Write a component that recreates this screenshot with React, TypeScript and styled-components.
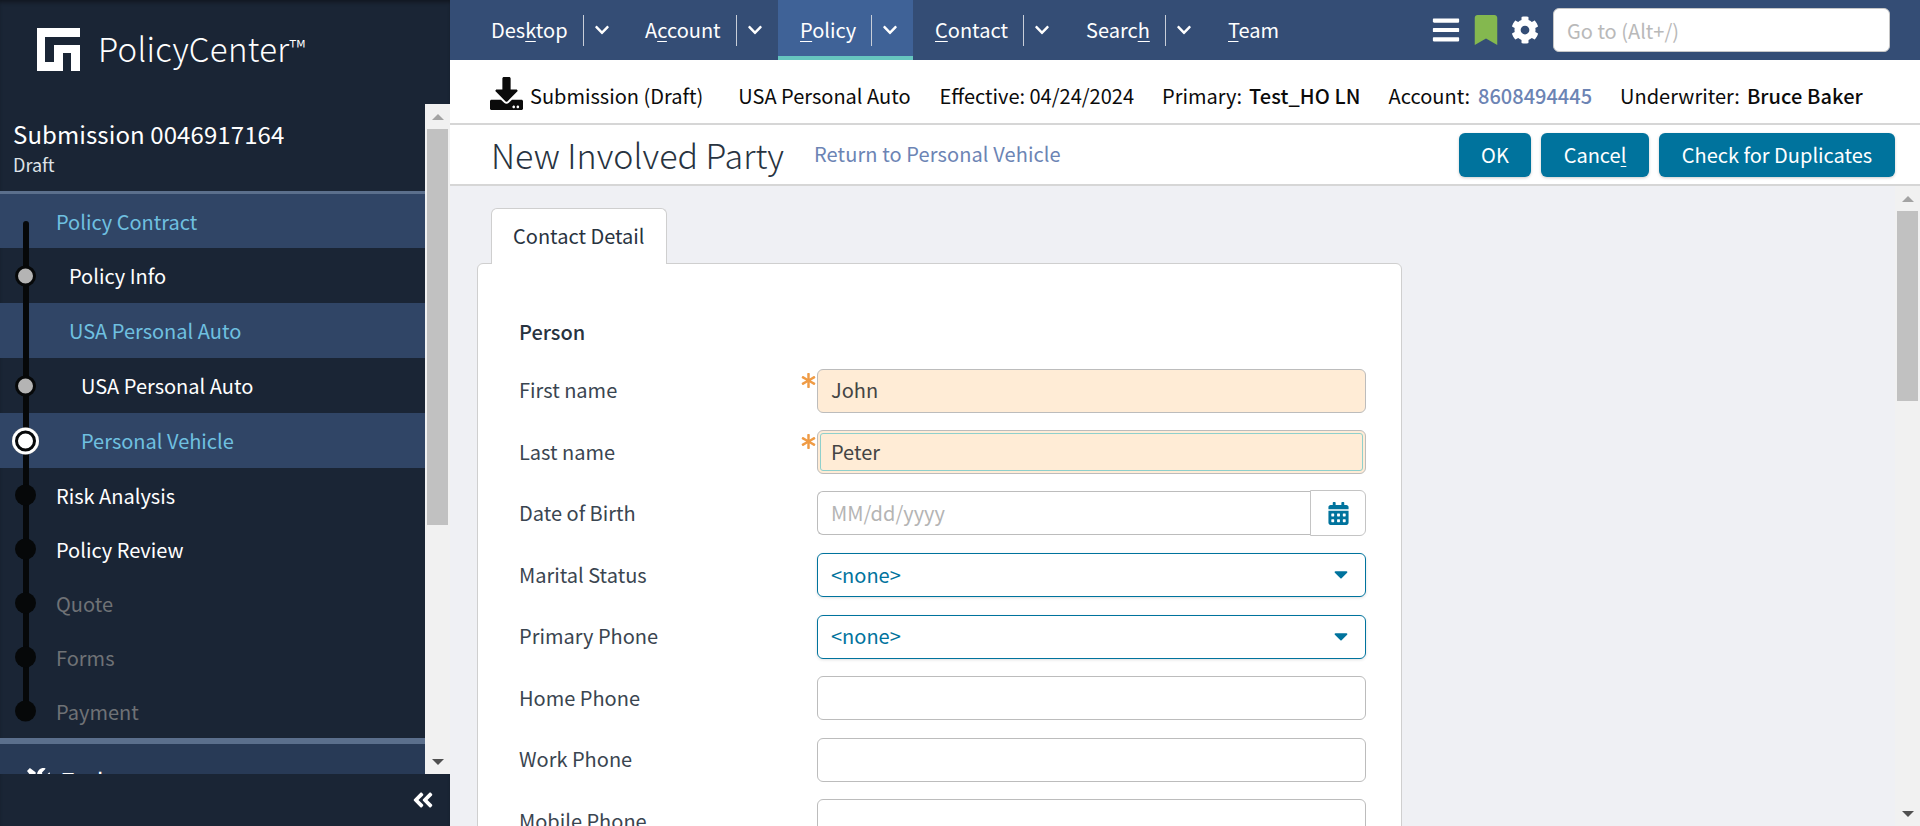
import React from "react";
import styled, { createGlobalStyle } from "styled-components";
import {
  FaAngleDoubleLeft,
  FaAsterisk,
  FaBars,
  FaBookmark,
  FaCalendarAlt,
  FaCaretDown,
  FaChevronDown,
  FaCog,
  FaDownload,
  FaTools,
} from "react-icons/fa";

const FONT = `"Noto Sans CJK SC", "Noto Sans", sans-serif`;

const GlobalStyle = createGlobalStyle`
  html, body { margin: 0; padding: 0; height: 100%; overflow: hidden; }
  body { font-family: ${FONT}; font-size: 20px; color: #28333f; }
  * { box-sizing: border-box; }
  u { text-underline-offset: 3px; text-decoration-thickness: 1px; }
`;

const Page = styled.div`
  display: flex;
  width: 1920px;
  height: 826px;
  overflow: hidden;
`;

/* ---- left column ---- */
const Side = styled.aside`
  width: 450px;
  flex: none;
  display: flex;
  flex-direction: column;
  background: #1a2535;
  color: #fff;
  box-shadow: inset 0 4px 4px -2px #11161f;
`;

const Brand = styled.div`
  height: 104px;
  flex: none;
  display: flex;
  align-items: flex-start;
  padding: 28px 0 0 37px;
  gap: 18px;
`;

const BrandName = styled.div`
  font-size: 33px;
  font-weight: 300;
  line-height: 41px;
  letter-spacing: 0.3px;
`;

const TradeMark = styled.span`
  font-size: 23px;
  line-height: 0;
  vertical-align: 5px;
`;

const SideBody = styled.div`
  flex: 1;
  display: flex;
  min-height: 0;
`;

const SideScroll = styled.div`
  width: 425px;
  overflow: hidden;
  display: flex;
  flex-direction: column;
`;

const SubmissionHead = styled.div`
  height: 87px;
  flex: none;
  padding: 14px 0 0 13px;
`;

const SubmissionTitle = styled.div`
  font-size: 24px;
  line-height: 32px;
  letter-spacing: 0.1px;
`;

const SubmissionState = styled.div`
  margin-top: 2px;
  font-size: 18px;
  line-height: 24px;
  color: #dfe3e8;
`;

const Divider = styled.div<{ $h: number }>`
  height: ${(p) => p.$h}px;
  flex: none;
  background: #5b6f8c;
`;

const Steps = styled.div`
  position: relative;
  flex: none;
`;

const Rail = styled.div`
  position: absolute;
  left: 23px;
  top: 27px;
  width: 6px;
  height: 491px;
  border-radius: 3px;
  background: #060809;
  z-index: 1;
`;

const Step = styled.div<{ $active?: boolean; $indent: number; $off?: boolean; $h: number }>`
  position: relative;
  height: ${(p) => p.$h}px;
  display: flex;
  align-items: center;
  padding-left: ${(p) => p.$indent}px;
  font-size: 20px;
  background: ${(p) => (p.$active ? "#304566" : "transparent")};
  color: ${(p) => (p.$active ? "#6fc0e0" : p.$off ? "#6f7276" : "#fff")};
`;

const Dot = styled.span<{ $kind: "plain" | "done" | "current" }>`
  position: absolute;
  z-index: 2;
  top: 50%;
  left: ${(p) => (p.$kind === "current" ? 12 : 15)}px;
  width: ${(p) => (p.$kind === "current" ? 27 : 21)}px;
  height: ${(p) => (p.$kind === "current" ? 27 : 21)}px;
  transform: translateY(-50%);
  border-radius: 50%;
  background: ${(p) => (p.$kind === "plain" ? "#060809" : p.$kind === "done" ? "#b4b4b4" : "#fff")};
  border: ${(p) => (p.$kind === "done" ? "3px solid #060809" : "none")};
  ${(p) => (p.$kind === "current" ? "box-shadow: inset 0 0 0 3px #fff, inset 0 0 0 6px #060809;" : "")}
`;

const ToolsRow = styled.div`
  height: 70px;
  flex: none;
  display: flex;
  align-items: center;
  gap: 12px;
  padding-left: 27px;
  background: #283a56;
  font-size: 20px;
  font-weight: 500;
`;

const Track = styled.div`
  flex: none;
  width: 25px;
  background: #f1f1f1;
  display: flex;
  flex-direction: column;
  align-items: center;
  padding: 0 2px;
`;

const Arrow = styled.div<{ $dir: "up" | "down"; $muted?: boolean }>`
  flex: none;
  height: 25px;
  width: 100%;
  display: flex;
  align-items: center;
  justify-content: center;
  &::before {
    content: "";
    width: 0;
    height: 0;
    border-left: 6px solid transparent;
    border-right: 6px solid transparent;
    ${(p) => (p.$dir === "up" ? "border-bottom" : "border-top")}: 6px solid ${(p) => (p.$muted ? "#a3a3a3" : "#505050")};
  }
`;

const Thumb = styled.div<{ $h: number }>`
  flex: none;
  width: 100%;
  height: ${(p) => p.$h}px;
  background: #c1c1c1;
`;

const TrackGap = styled.div`
  flex: 1;
`;

const SideFoot = styled.div`
  height: 52px;
  flex: none;
  display: flex;
  align-items: center;
  justify-content: flex-end;
  padding-right: 15px;
  font-size: 24px;
`;

/* ---- main column ---- */
const Main = styled.main`
  flex: 1;
  min-width: 0;
  display: flex;
  flex-direction: column;
`;

const TopNav = styled.nav`
  height: 60px;
  flex: none;
  display: flex;
  align-items: stretch;
  background: #344d75;
  color: #fff;
  padding-left: 41px;
`;

const NavItem = styled.div<{ $active?: boolean; $w: number; $after?: number }>`
  width: ${(p) => p.$w}px;
  margin-right: ${(p) => p.$after ?? 0}px;
  display: flex;
  align-items: center;
  flex: none;
  background: ${(p) => (p.$active ? "#3f6297" : "transparent")};
  box-shadow: ${(p) => (p.$active ? "inset 0 -4px 0 #66c6c0" : "none")};
  padding-left: ${(p) => (p.$active ? 22 : 0)}px;
  font-size: 20px;
`;

const NavLabel = styled.span`
  line-height: 28px;
`;

const NavSep = styled.span`
  width: 1px;
  height: 31px;
  background: #c8ced8;
  margin: 0 10px 0 15px;
`;

const NavTail = styled.div`
  margin-left: auto;
  display: flex;
  align-items: center;
  gap: 10px;
  padding-right: 30px;
`;

const GoTo = styled.input`
  width: 337px;
  height: 44px;
  margin-left: 4px;
  border: 1px solid #c6c6c6;
  border-radius: 6px;
  padding: 0 13px;
  font: 400 20px ${FONT};
  color: #333;
  &::placeholder {
    color: #b9b9b9;
    opacity: 1;
  }
`;

const InfoBar = styled.div`
  height: 65px;
  flex: none;
  display: flex;
  align-items: center;
  padding: 7px 0 0 40px;
  border-bottom: 2px solid #d6d6d6;
  background: #fff;
  color: #0b0b0b;
  font-size: 20px;
`;

const DownloadIcon = styled(FaDownload)`
  margin: -4px 7px 0 0;
`;

const InfoItem = styled.span<{ $gap: number }>`
  margin-right: ${(p) => p.$gap}px;
  white-space: nowrap;
`;

const InfoStrong = styled.b`
  font-weight: 500;
  margin-left: 7px;
  letter-spacing: 0.1px;
`;

const InfoLink = styled.b`
  font-weight: 500;
  margin-left: 8px;
  color: #6c84b4;
`;

const TitleBar = styled.div`
  height: 61px;
  flex: none;
  display: flex;
  align-items: center;
  background: #fff;
  border-bottom: 2px solid #d6d6d6;
  padding: 0 25px 0 41px;
`;

const PageTitle = styled.h1`
  margin: 0;
  font-size: 34px;
  font-weight: 300;
  color: #28333f;
`;

const BackLink = styled.a`
  margin: 0 0 3px 30px;
  color: #6c84b4;
  font-size: 20px;
  letter-spacing: 0.1px;
`;

const Actions = styled.div`
  margin-left: auto;
  display: flex;
  gap: 10px;
`;

const ActionBtn = styled.button<{ $w: number }>`
  width: ${(p) => p.$w}px;
  height: 44px;
  border: none;
  border-radius: 6px;
  background: #00739d;
  color: #fff;
  font: 400 20px ${FONT};
  box-shadow: 0 1px 3px rgba(0, 0, 0, 0.2);
`;

const Content = styled.div`
  flex: 1;
  min-height: 0;
  display: flex;
  background: #eff0f4;
`;

const Canvas = styled.div`
  flex: 1;
  min-width: 0;
  overflow: hidden;
  padding: 22px 0 0 27px;
`;

const TabRow = styled.div`
  display: flex;
  padding-left: 14px;
`;

const Tab = styled.div`
  width: 176px;
  height: 56px;
  margin-bottom: -1px;
  position: relative;
  z-index: 1;
  background: #fff;
  border: 1px solid #cfcfcf;
  border-bottom: none;
  border-radius: 6px 6px 0 0;
  padding-left: 21px;
  line-height: 54px;
  font-size: 20px;
`;

const Card = styled.section`
  width: 925px;
  height: 700px;
  background: #fff;
  border: 1px solid #cfcfcf;
  border-radius: 6px;
  padding: 54px 36px 0 41px;
`;

const SectionTitle = styled.div`
  font-size: 20px;
  font-weight: 500;
  line-height: 28px;
  margin-bottom: 22px;
`;

const FormRow = styled.div`
  display: grid;
  grid-template-columns: 298px 549px;
  align-items: center;
  height: 45px;
  margin-bottom: 16.5px;
  color: #3a4550;
`;

const FormLabel = styled.span`
  margin-top: -2px;
`;

const FieldWrap = styled.div`
  position: relative;
  display: flex;
`;

const Star = styled(FaAsterisk)`
  position: absolute;
  left: -16px;
  top: 4px;
  color: #ef9b45;
  font-size: 15px;
`;

const TextInput = styled.input<{ $required?: boolean; $focus?: boolean }>`
  flex: 1;
  min-width: 0;
  height: 44px;
  border: 1px solid #bcbcbc;
  border-radius: 6px;
  padding: 0 13px 2px;
  background: ${(p) => (p.$required ? "#ffecd6" : "#fff")};
  font: 400 20px ${FONT};
  color: #444;
  outline: ${(p) => (p.$focus ? "1px solid #8fd0cc" : "none")};
  outline-offset: -4px;
  &::placeholder {
    color: #b4b4b4;
    opacity: 1;
  }
`;

const DateInput = styled(TextInput)`
  border-right: none;
  border-radius: 6px 0 0 6px;
`;

const CalendarBtn = styled.div`
  width: 56px;
  height: 46px;
  flex: none;
  margin-top: -1px;
  display: flex;
  align-items: center;
  justify-content: center;
  border: 1px solid #c4c4c4;
  border-radius: 0 6px 6px 0;
  color: #00739d;
  font-size: 23px;
`;

const SelectBox = styled.div`
  flex: 1;
  height: 44px;
  display: flex;
  align-items: center;
  justify-content: space-between;
  padding: 0 13px 2px;
  border: 1px solid #00739d;
  border-radius: 6px;
  color: #00739d;
  box-shadow: 0 1px 3px rgba(0, 0, 0, 0.12);
`;

const navItems = [
  { label: <NavLabel>Des<u>k</u>top</NavLabel>, w: 154, menu: true },
  { label: <NavLabel>A<u>c</u>count</NavLabel>, w: 133, menu: true },
  { label: <NavLabel><u>P</u>olicy</NavLabel>, w: 135, active: true, menu: true, after: 22 },
  { label: <NavLabel><u>C</u>ontact</NavLabel>, w: 151, menu: true },
  { label: <NavLabel>Searc<u>h</u></NavLabel>, w: 142, menu: true },
  { label: <NavLabel><u>T</u>eam</NavLabel>, w: 80, menu: false },
];

const steps = [
  { label: "Policy Contract", indent: 56, active: true, h: 54 },
  { label: "Policy Info", indent: 69, dot: "done" as const, h: 55 },
  { label: "USA Personal Auto", indent: 69, active: true, h: 55 },
  { label: "USA Personal Auto", indent: 81, dot: "done" as const, h: 55 },
  { label: "Personal Vehicle", indent: 81, active: true, dot: "current" as const, h: 55 },
  { label: "Risk Analysis", indent: 56, dot: "plain" as const, h: 54 },
  { label: "Policy Review", indent: 56, dot: "plain" as const, h: 54 },
  { label: "Quote", indent: 56, dot: "plain" as const, off: true, h: 54 },
  { label: "Forms", indent: 56, dot: "plain" as const, off: true, h: 54 },
  { label: "Payment", indent: 56, dot: "plain" as const, off: true, h: 54 },
];

const Logo = () => (
  <svg width="43" height="43" viewBox="0 0 43 43">
    <path fill="#fff" d="M0 0H43V9H8V34H17V17H43V43H34V25H26V43H0Z" />
  </svg>
);

const App: React.FC = () => (
  <Page>
    <GlobalStyle />
    <Side>
      <Brand>
        <Logo />
        <BrandName>
          PolicyCenter<TradeMark>™</TradeMark>
        </BrandName>
      </Brand>
      <SideBody>
        <SideScroll>
          <SubmissionHead>
            <SubmissionTitle>Submission 0046917164</SubmissionTitle>
            <SubmissionState>Draft</SubmissionState>
          </SubmissionHead>
          <Divider $h={3} />
          <Steps>
            <Rail />
            {steps.map((s, i) => (
              <Step key={i} $indent={s.indent} $active={s.active} $off={s.off} $h={s.h}>
                {s.dot && <Dot $kind={s.dot} />}
                {s.label}
              </Step>
            ))}
          </Steps>
          <Divider $h={6} />
          <ToolsRow>
            <FaTools size={23} />
            Tools
          </ToolsRow>
        </SideScroll>
        <Track>
          <Arrow $dir="up" $muted />
          <Thumb $h={396} />
          <TrackGap />
          <Arrow $dir="down" />
        </Track>
      </SideBody>
      <SideFoot>
        <FaAngleDoubleLeft />
      </SideFoot>
    </Side>
    <Main>
      <TopNav>
        {navItems.map((n, i) => (
          <NavItem key={i} $w={n.w} $active={n.active} $after={n.after}>
            {n.label}
            {n.menu && (
              <>
                <NavSep />
                <FaChevronDown size={16} />
              </>
            )}
          </NavItem>
        ))}
        <NavTail>
          <FaBars size={30} />
          <FaBookmark size={30} color="#84b84f" />
          <FaCog size={28} />
          <GoTo placeholder="Go to (Alt+/)" />
        </NavTail>
      </TopNav>
      <InfoBar>
        <DownloadIcon size={33} />
        <InfoItem $gap={35}>Submission (Draft)</InfoItem>
        <InfoItem $gap={29}>USA Personal Auto</InfoItem>
        <InfoItem $gap={28}>Effective: 04/24/2024</InfoItem>
        <InfoItem $gap={28}>
          Primary:<InfoStrong>Test_HO LN</InfoStrong>
        </InfoItem>
        <InfoItem $gap={28}>
          Account:<InfoLink>8608494445</InfoLink>
        </InfoItem>
        <InfoItem $gap={0}>
          Underwriter:<InfoStrong>Bruce Baker</InfoStrong>
        </InfoItem>
      </InfoBar>
      <TitleBar>
        <PageTitle>New Involved Party</PageTitle>
        <BackLink>Return to Personal Vehicle</BackLink>
        <Actions>
          <ActionBtn $w={72}>OK</ActionBtn>
          <ActionBtn $w={108}>
            Cance<u>l</u>
          </ActionBtn>
          <ActionBtn $w={236}>Check for Duplicates</ActionBtn>
        </Actions>
      </TitleBar>
      <Content>
        <Canvas>
          <TabRow>
            <Tab>Contact Detail</Tab>
          </TabRow>
          <Card>
            <SectionTitle>Person</SectionTitle>
            <FormRow>
              <FormLabel>First name</FormLabel>
              <FieldWrap>
                <Star />
                <TextInput $required defaultValue="John" />
              </FieldWrap>
            </FormRow>
            <FormRow>
              <FormLabel>Last name</FormLabel>
              <FieldWrap>
                <Star />
                <TextInput $required $focus defaultValue="Peter" />
              </FieldWrap>
            </FormRow>
            <FormRow>
              <FormLabel>Date of Birth</FormLabel>
              <FieldWrap>
                <DateInput placeholder="MM/dd/yyyy" />
                <CalendarBtn>
                  <FaCalendarAlt />
                </CalendarBtn>
              </FieldWrap>
            </FormRow>
            <FormRow>
              <FormLabel>Marital Status</FormLabel>
              <FieldWrap>
                <SelectBox>
                  &lt;none&gt;
                  <FaCaretDown size={22} />
                </SelectBox>
              </FieldWrap>
            </FormRow>
            <FormRow>
              <FormLabel>Primary Phone</FormLabel>
              <FieldWrap>
                <SelectBox>
                  &lt;none&gt;
                  <FaCaretDown size={22} />
                </SelectBox>
              </FieldWrap>
            </FormRow>
            <FormRow>
              <FormLabel>Home Phone</FormLabel>
              <FieldWrap>
                <TextInput />
              </FieldWrap>
            </FormRow>
            <FormRow>
              <FormLabel>Work Phone</FormLabel>
              <FieldWrap>
                <TextInput />
              </FieldWrap>
            </FormRow>
            <FormRow>
              <FormLabel>Mobile Phone</FormLabel>
              <FieldWrap>
                <TextInput />
              </FieldWrap>
            </FormRow>
          </Card>
        </Canvas>
        <Track>
          <Arrow $dir="up" $muted />
          <Thumb $h={190} />
          <TrackGap />
          <Arrow $dir="down" />
        </Track>
      </Content>
    </Main>
  </Page>
);

export default App;
